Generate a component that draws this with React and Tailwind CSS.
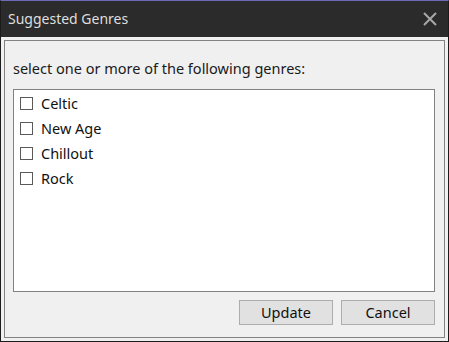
import React from "react";

const genres = ["Celtic", "New Age", "Chillout", "Rock"];

export default function App() {
  return (
    <div
      className="w-[449px] h-[342px] flex flex-col border border-[#1b1b1b] border-t-[#6d6bb8] bg-[#f0f0f0] text-[#000]"
      style={{ fontFamily: '"Noto Sans", "Open Sans", sans-serif' }}
    >
      <div className="h-[36px] bg-[#2b2b2b] flex items-center justify-between pl-[7px] pr-[11px] shrink-0">
        <span className="text-[14px] text-[#dedede] leading-none">Suggested Genres</span>
        <svg width="14" height="14" viewBox="0 0 14 14" className="block">
          <path d="M1 1 L13 13 M13 1 L1 13" stroke="#a8a8a8" strokeWidth="2" />
        </svg>
      </div>
      <div className="flex-1 p-[3px] flex">
        <div className="flex-1 border border-[#828282] flex flex-col pl-[8px] pr-[9px] pt-[17px] pb-[12px]">
          <div className="text-[14.5px] leading-[20px] text-[#1a1a1a]">
            select one or more of the following genres:
          </div>
          <div className="mt-[11px] h-[203px] bg-white border border-[#828282] pt-[1px] pl-[6px]">
            {genres.map((g) => (
              <div key={g} className="h-[25px] flex items-center">
                <div className="w-[13px] h-[13px] border border-[#5a5a5a] bg-white shrink-0" />
                <span className="ml-[8px] text-[14.5px] leading-none text-[#111]">{g}</span>
              </div>
            ))}
          </div>
          <div className="mt-[8px] flex justify-end gap-[8px]">
            <button className="w-[94px] h-[25px] bg-[#e1e1e1] border border-[#adadad] text-[14.5px] leading-none text-[#111]">
              Update
            </button>
            <button className="w-[94px] h-[25px] bg-[#e1e1e1] border border-[#adadad] text-[14.5px] leading-none text-[#111]">
              Cancel
            </button>
          </div>
        </div>
      </div>
    </div>
  );
}
